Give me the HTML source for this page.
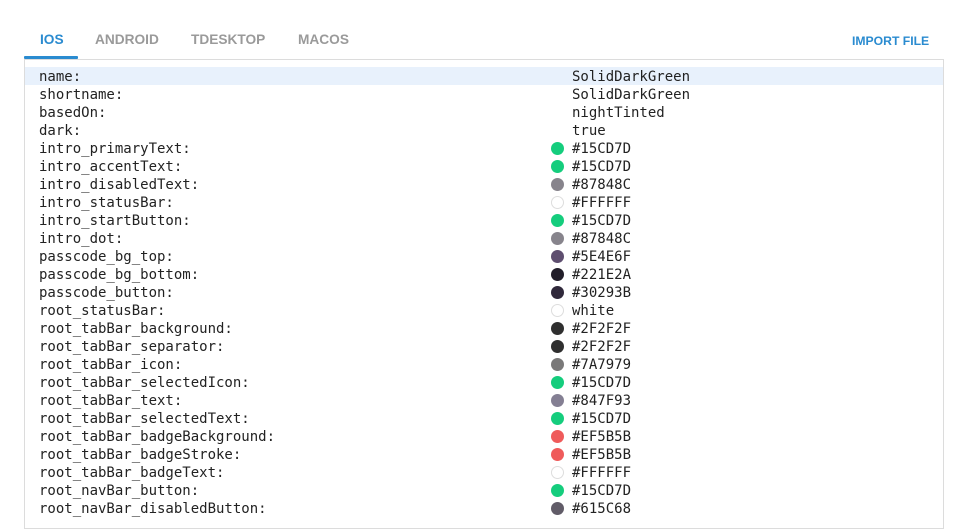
<!DOCTYPE html>
<html><head><meta charset="utf-8"><style>
*{margin:0;padding:0;box-sizing:border-box}
body{width:977px;height:511px;overflow:hidden;background:#fff;font-family:"Liberation Sans",sans-serif;position:relative}
.tab{position:absolute;top:32px;font-size:13.7px;font-weight:bold;color:#9a9a9a}
.tab.a{color:#2a8bd0}
.ul{position:absolute;left:24px;top:56px;width:54px;height:3px;background:#2a8bd0;border-radius:1px}
.imp{position:absolute;left:852px;top:34px;font-size:12.2px;font-weight:bold;color:#2a8bd0}
.box{position:absolute;left:24px;top:59px;width:920px;height:470px;border:1px solid #dcdcdc}
.row{position:absolute;left:0;width:918px;height:18px;font-family:"DejaVu Sans Mono",monospace;font-size:14px;line-height:18px;color:#222}
.row.h{background:#e8f1fc}
.k{position:absolute;left:14px;top:1px}
.v{position:absolute;left:547px;top:1px}
.d{position:absolute;left:526px;top:3px;width:13px;height:13px;border-radius:50%}
</style></head><body>
<div class="tab a" style="left:40px">IOS</div>
<div class="tab" style="left:95px">ANDROID</div>
<div class="tab" style="left:191px">TDESKTOP</div>
<div class="tab" style="left:298px">MACOS</div>
<div class="ul"></div>
<div class="imp">IMPORT FILE</div>
<div class="box">
<div class="row h" style="top:7px"><span class="k">name:</span><span class="v">SolidDarkGreen</span></div>
<div class="row" style="top:25px"><span class="k">shortname:</span><span class="v">SolidDarkGreen</span></div>
<div class="row" style="top:43px"><span class="k">basedOn:</span><span class="v">nightTinted</span></div>
<div class="row" style="top:61px"><span class="k">dark:</span><span class="v">true</span></div>
<div class="row" style="top:79px"><span class="k">intro_primaryText:</span><i class="d" style="background:#15CD7D"></i><span class="v">#15CD7D</span></div>
<div class="row" style="top:97px"><span class="k">intro_accentText:</span><i class="d" style="background:#15CD7D"></i><span class="v">#15CD7D</span></div>
<div class="row" style="top:115px"><span class="k">intro_disabledText:</span><i class="d" style="background:#87848C"></i><span class="v">#87848C</span></div>
<div class="row" style="top:133px"><span class="k">intro_statusBar:</span><i class="d" style="background:#fff;border:1px solid #ddd"></i><span class="v">#FFFFFF</span></div>
<div class="row" style="top:151px"><span class="k">intro_startButton:</span><i class="d" style="background:#15CD7D"></i><span class="v">#15CD7D</span></div>
<div class="row" style="top:169px"><span class="k">intro_dot:</span><i class="d" style="background:#87848C"></i><span class="v">#87848C</span></div>
<div class="row" style="top:187px"><span class="k">passcode_bg_top:</span><i class="d" style="background:#5E4E6F"></i><span class="v">#5E4E6F</span></div>
<div class="row" style="top:205px"><span class="k">passcode_bg_bottom:</span><i class="d" style="background:#221E2A"></i><span class="v">#221E2A</span></div>
<div class="row" style="top:223px"><span class="k">passcode_button:</span><i class="d" style="background:#30293B"></i><span class="v">#30293B</span></div>
<div class="row" style="top:241px"><span class="k">root_statusBar:</span><i class="d" style="background:#fff;border:1px solid #ddd"></i><span class="v">white</span></div>
<div class="row" style="top:259px"><span class="k">root_tabBar_background:</span><i class="d" style="background:#2F2F2F"></i><span class="v">#2F2F2F</span></div>
<div class="row" style="top:277px"><span class="k">root_tabBar_separator:</span><i class="d" style="background:#2F2F2F"></i><span class="v">#2F2F2F</span></div>
<div class="row" style="top:295px"><span class="k">root_tabBar_icon:</span><i class="d" style="background:#7A7979"></i><span class="v">#7A7979</span></div>
<div class="row" style="top:313px"><span class="k">root_tabBar_selectedIcon:</span><i class="d" style="background:#15CD7D"></i><span class="v">#15CD7D</span></div>
<div class="row" style="top:331px"><span class="k">root_tabBar_text:</span><i class="d" style="background:#847F93"></i><span class="v">#847F93</span></div>
<div class="row" style="top:349px"><span class="k">root_tabBar_selectedText:</span><i class="d" style="background:#15CD7D"></i><span class="v">#15CD7D</span></div>
<div class="row" style="top:367px"><span class="k">root_tabBar_badgeBackground:</span><i class="d" style="background:#EF5B5B"></i><span class="v">#EF5B5B</span></div>
<div class="row" style="top:385px"><span class="k">root_tabBar_badgeStroke:</span><i class="d" style="background:#EF5B5B"></i><span class="v">#EF5B5B</span></div>
<div class="row" style="top:403px"><span class="k">root_tabBar_badgeText:</span><i class="d" style="background:#fff;border:1px solid #ddd"></i><span class="v">#FFFFFF</span></div>
<div class="row" style="top:421px"><span class="k">root_navBar_button:</span><i class="d" style="background:#15CD7D"></i><span class="v">#15CD7D</span></div>
<div class="row" style="top:439px"><span class="k">root_navBar_disabledButton:</span><i class="d" style="background:#615C68"></i><span class="v">#615C68</span></div>
</div>
</body></html>
